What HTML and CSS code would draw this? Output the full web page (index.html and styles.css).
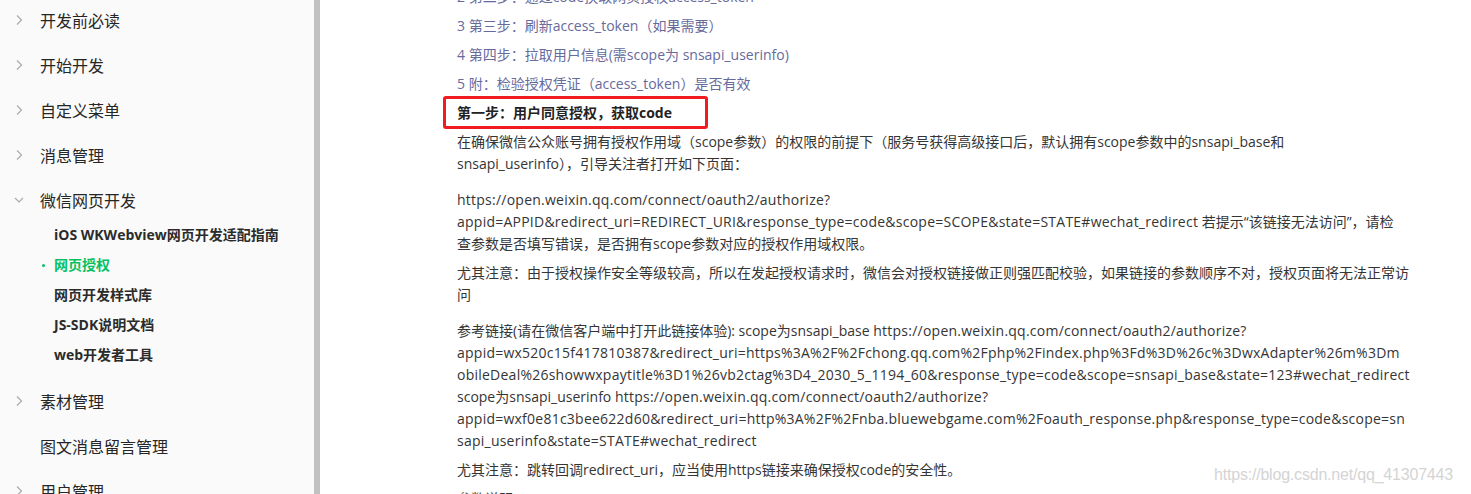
FILE: index.html
```
<!DOCTYPE html>
<html lang="zh-CN">
<head>
  <meta charset="UTF-8">
  <meta name="viewport" content="width=device-width, initial-scale=1.0">
  <title>网页授权 | 微信开放文档</title>
  <link rel="stylesheet" href="styles.css">
</head>
<body>
  <!-- Left menu -->
  <aside class="sidebar">
    <ul class="menu">
      <li class="menu-item">
        <div class="menu-title"><svg class="arrow" viewBox="0 0 10 10"><path d="M3 0.5 L7.5 5 L3 9.5"/></svg>开发前必读</div>
      </li>
      <li class="menu-item">
        <div class="menu-title"><svg class="arrow" viewBox="0 0 10 10"><path d="M3 0.5 L7.5 5 L3 9.5"/></svg>开始开发</div>
      </li>
      <li class="menu-item">
        <div class="menu-title"><svg class="arrow" viewBox="0 0 10 10"><path d="M3 0.5 L7.5 5 L3 9.5"/></svg>自定义菜单</div>
      </li>
      <li class="menu-item">
        <div class="menu-title"><svg class="arrow" viewBox="0 0 10 10"><path d="M3 0.5 L7.5 5 L3 9.5"/></svg>消息管理</div>
      </li>
      <li class="menu-item open">
        <div class="menu-title"><svg class="arrow" viewBox="0 0 10 10"><path d="M1 3 L5 7 L9 3"/></svg>微信网页开发</div>
        <ul class="submenu">
          <li>iOS WKWebview网页开发适配指南</li>
          <li class="active">网页授权</li>
          <li>网页开发样式库</li>
          <li>JS-SDK说明文档</li>
          <li>web开发者工具</li>
        </ul>
      </li>
      <li class="menu-item">
        <div class="menu-title"><svg class="arrow" viewBox="0 0 10 10"><path d="M3 0.5 L7.5 5 L3 9.5"/></svg>素材管理</div>
      </li>
      <li class="menu-item">
        <div class="menu-title"><span class="arrow"></span>图文消息留言管理</div>
      </li>
      <li class="menu-item">
        <div class="menu-title"><svg class="arrow" viewBox="0 0 10 10"><path d="M3 0.5 L7.5 5 L3 9.5"/></svg>用户管理</div>
      </li>
    </ul>
  </aside>
  <div class="scrollbar"></div>

  <!-- Article -->
  <main class="content">
    <ul class="steps">
      <li>2 第二步：通过code换取网页授权access_token</li>
      <li>3 第三步：刷新access_token（如果需要）</li>
      <li>4 第四步：拉取用户信息(需scope为 snsapi_userinfo)</li>
      <li>5 附：检验授权凭证（access_token）是否有效</li>
    </ul>

    <h3 class="step-title">第一步：用户同意授权，获取code</h3>

    <p class="gap">在确保微信公众账号拥有授权作用域（scope参数）的权限的前提下（服务号获得高级接口后，默认拥有scope参数中的snsapi_base和<br>snsapi_userinfo），引导关注者打开如下页面：</p>

    <p><span class="url">https://open.weixin.qq.com/connect/oauth2/authorize?<br>appid=APPID&amp;redirect_uri=REDIRECT_URI&amp;response_type=code&amp;scope=SCOPE&amp;state=STATE#wechat_redirect</span> 若提示“该链接无法访问”，请检<br>查参数是否填写错误，是否拥有scope参数对应的授权作用域权限。</p>

    <p class="gap">尤其注意：由于授权操作安全等级较高，所以在发起授权请求时，微信会对授权链接做正则强匹配校验，如果链接的参数顺序不对，授权页面将无法正常访<br>问</p>

    <p>参考链接(请在微信客户端中打开此链接体验): scope为snsapi_base <span class="url">https://open.weixin.qq.com/connect/oauth2/authorize?<br>appid=wx520c15f417810387&amp;redirect_uri=https%3A%2F%2Fchong.qq.com%2Fphp%2Findex.php%3Fd%3D%26c%3DwxAdapter%26m%3Dm<br>obileDeal%26showwxpaytitle%3D1%26vb2ctag%3D4_2030_5_1194_60&amp;response_type=code&amp;scope=snsapi_base&amp;state=123#wechat_redirect</span><br>scope为snsapi_userinfo <span class="url">https://open.weixin.qq.com/connect/oauth2/authorize?<br>appid=wxf0e81c3bee622d60&amp;redirect_uri=http%3A%2F%2Fnba.bluewebgame.com%2Foauth_response.php&amp;response_type=code&amp;scope=sn<br>sapi_userinfo&amp;state=STATE#wechat_redirect</span></p>

    <p>尤其注意：跳转回调redirect_uri，应当使用https链接来确保授权code的安全性。</p>

    <p>参数说明</p>

    <div class="watermark">https://blog.csdn.net/qq_41307443</div>
  </main>
</body>
</html>
```

FILE: styles.css
```
html, body {
  margin: 0;
  padding: 0;
  height: 100%;
  overflow: hidden;
  background: #fff;
}
body {
  display: flex;
  font-family: "Open Sans", "Noto Sans CJK SC", sans-serif;
  color: #353535;
}

/* sidebar */
.sidebar {
  width: 314px;
  flex-shrink: 0;
  background: #fafafa;
}
.scrollbar {
  width: 6px;
  flex-shrink: 0;
  background: #c1c1c1;
}
.menu, .submenu, .steps {
  list-style: none;
  margin: 0;
  padding: 0;
}
.menu {
  margin-top: -3px;
}
.menu-title {
  display: flex;
  align-items: center;
  height: 45px;
  font-size: 16px;
  color: #262626;
}
.arrow {
  width: 10px;
  height: 10px;
  margin: 0 16px 0 14px;
  fill: none;
  stroke: #ababab;
  stroke-width: 1.2;
}
.submenu {
  margin-top: -2px;
  padding-bottom: 8px;
}
.submenu li {
  position: relative;
  height: 30px;
  line-height: 30px;
  padding-left: 54px;
  font-size: 14px;
  font-weight: bold;
  color: #2b2b2b;
  white-space: nowrap;
}
.submenu li.active {
  color: #07c160;
}
.submenu li.active::before {
  content: '';
  position: absolute;
  left: 42px;
  top: 14px;
  width: 3px;
  height: 3px;
  border-radius: 50%;
  background: #07c160;
}

/* article */
.content {
  position: relative;
  flex: 1;
  padding-left: 137px;
  margin-top: -14px;
  font-size: 14px;
  line-height: 22px;
  white-space: nowrap;
}
.steps li {
  margin-bottom: 7px;
  color: #686a9c;
}
.step-title {
  position: relative;
  margin: 0 0 7px;
  font-size: 14px;
  font-weight: bold;
  color: #222;
}
.step-title::after {
  content: '';
  position: absolute;
  left: -14px;
  top: -6px;
  width: 259px;
  height: 27px;
  border: 3px solid #f01c1f;
  border-radius: 3px;
}
.content p {
  margin: 0 0 7px;
}
.content p.gap {
  margin-bottom: 14px;
}
.url {
  letter-spacing: 0.24px;
}
.watermark {
  position: absolute;
  left: 894px;
  top: 478px;
  font-family: "Liberation Sans", Arial, sans-serif;
  font-size: 16px;
  letter-spacing: -0.2px;
  line-height: 22px;
  color: #d4d4d4;
}
```
